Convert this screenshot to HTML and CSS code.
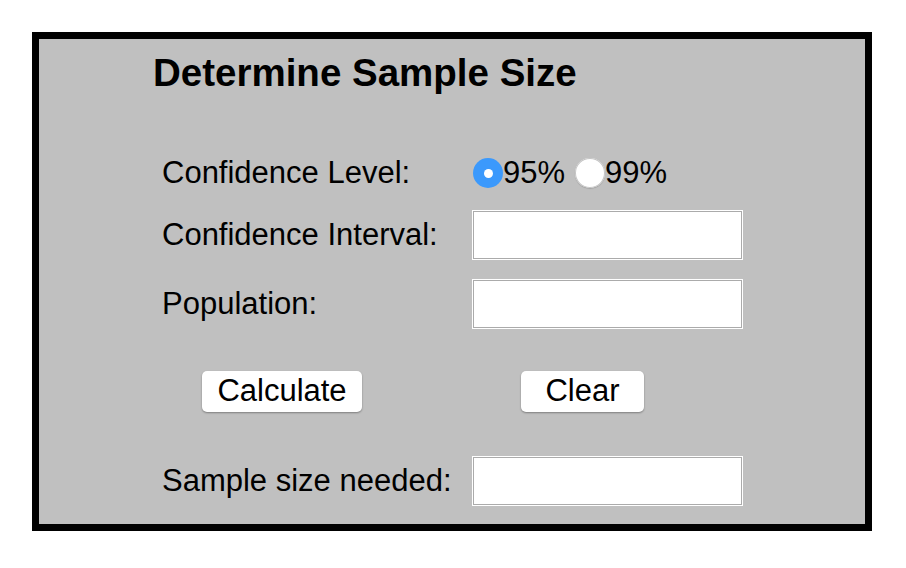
FILE: index.html
```html
<!DOCTYPE html>
<html>
<head>
<meta charset="utf-8">
<link rel="stylesheet" href="styles.css">
</head>
<body>
<div class="box">
  <h1 class="title">Determine Sample Size</h1>
  <div class="form">
    <div class="label row1">Confidence Level:</div>
    <div class="radios row1">
      <span class="radio checked"></span><span class="rtext">95%</span>
      <span class="radio"></span><span class="rtext">99%</span>
    </div>
    <div class="label">Confidence Interval:</div>
    <div class="field"><span class="input"></span></div>
    <div class="label">Population:</div>
    <div class="field"><span class="input"></span></div>
  </div>
  <div class="buttons">
    <span class="btn btn-calc">Calculate</span>
    <span class="btn btn-clear">Clear</span>
  </div>
  <div class="form result">
    <div class="label">Sample size needed:</div>
    <div class="field"><span class="input"></span></div>
  </div>
</div>
</body>
</html>
```

FILE: styles.css
```css
html, body {
  margin: 0;
  padding: 0;
  background: #ffffff;
}
body {
  font-family: "Liberation Sans", Arial, sans-serif;
  color: #000;
}
.box {
  box-sizing: border-box;
  margin: 32px 0 0 32px;
  width: 840px;
  height: 499px;
  border: 7px solid #000;
  background: #c0c0c0;
  padding: 0 0 0 114px;
}
.title {
  margin: 0;
  padding-top: 12px;
  font-size: 38.5px;
  line-height: 44px;
  font-weight: bold;
}
.form {
  display: grid;
  grid-template-columns: 311px 269px;
  margin-left: 9px;
  margin-top: 61px;
  row-gap: 21px;
  align-items: center;
  font-size: 31px;
}
.label {
  line-height: 32px;
}
.row1 {
  height: 34px;
  line-height: 34px;
}
.radios {
  display: flex;
  align-items: center;
}
.radio {
  box-sizing: border-box;
  width: 30px;
  height: 30px;
  border-radius: 50%;
  background: #fff;
  box-shadow: inset 0 0 0 1px #c4c4c4, 0 1px 1px rgba(0,0,0,0.15);
}
.radio.checked {
  background: #3b99fc;
  box-shadow: none;
  display: flex;
  align-items: center;
  justify-content: center;
}
.radio.checked::after {
  content: "";
  width: 9px;
  height: 9px;
  border-radius: 50%;
  background: #fff;
}
.rtext {
  margin-right: 10px;
}
.field {
  display: flex;
}
.input {
  box-sizing: border-box;
  width: 269px;
  height: 48px;
  background: #fff;
  border: 1px solid #ababab;
  box-shadow: 0 0 0 1px #fff;
}
.buttons {
  display: flex;
  margin-top: 43px;
  margin-left: 49px;
}
.btn {
  box-sizing: border-box;
  height: 41px;
  background: #fff;
  border-radius: 5px;
  box-shadow: 0 1px 2px rgba(0,0,0,0.35);
  font-size: 31px;
  line-height: 39px;
  text-align: center;
}
.btn-calc {
  width: 160px;
}
.btn-clear {
  width: 123px;
  margin-left: 159px;
}
.result {
  margin-top: 45px;
}
```
